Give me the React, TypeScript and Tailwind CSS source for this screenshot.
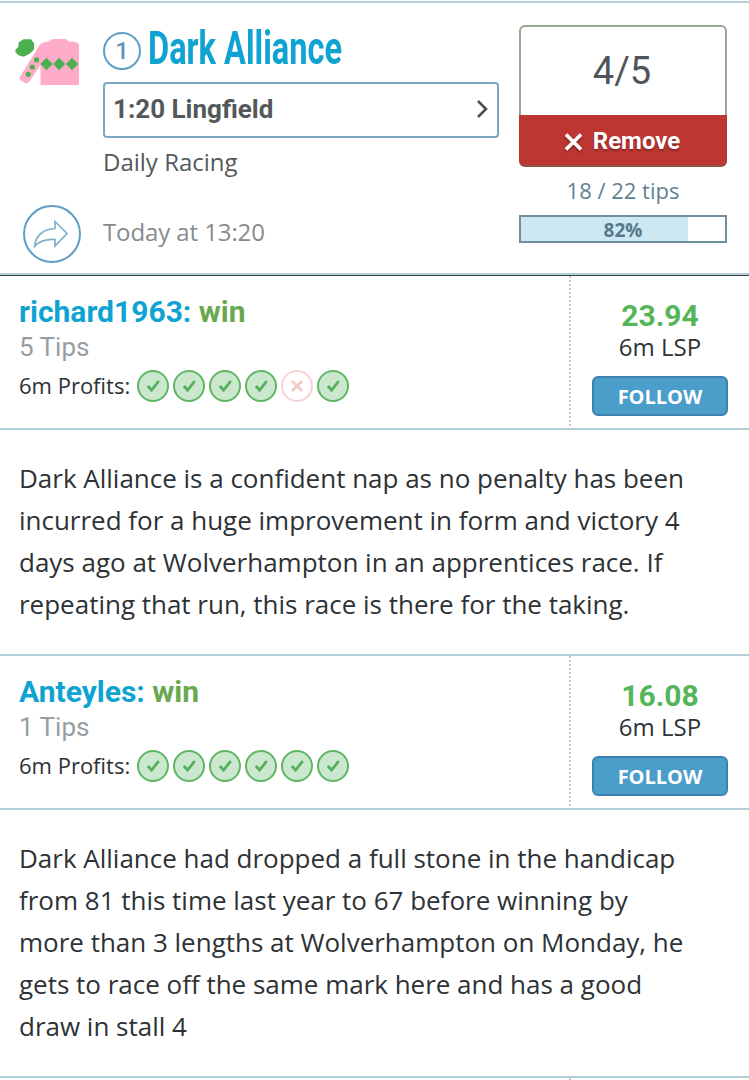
const tips = [
  {
    name: "richard1963:",
    pick: "win",
    count: "5 Tips",
    profits: [true, true, true, true, false, true],
    lsp: "23.94",
    lines: [
      "Dark Alliance is a confident nap as no penalty has been",
      "incurred for a huge improvement in form and victory 4",
      "days ago at Wolverhampton in an apprentices race. If",
      "repeating that run, this race is there for the taking.",
    ],
  },
  {
    name: "Anteyles:",
    pick: "win",
    count: "1 Tips",
    profits: [true, true, true, true, true, true],
    lsp: "16.08",
    lines: [
      "Dark Alliance had dropped a full stone in the handicap",
      "from 81 this time last year to 67 before winning by",
      "more than 3 lengths at Wolverhampton on Monday, he",
      "gets to race off the same mark here and has a good",
      "draw in stall 4",
    ],
  },
];

function Silks() {
  return (
    <svg width="66" height="48" viewBox="0 0 66 48" className="block">
      <path d="M25 6.500 L28 4.500 L34 3.500 L37 1 H51 L54 3.500 L61 4 L64 6.500 V47 H25.500 V27 L14 44 L11 45.500 L5 42 L4.500 39.500 Z" fill="#ffacca" />
      <path d="M3.500 4.500 L8.500 1.200 L16 1.200 L19.200 5.500 L19 11.500 L15 15.500 L8.500 18.700 L4 17.500 L0.500 14.500 L0.500 11.500 L3.500 9 Z" fill="#4caf50" />
      <g fill="#4caf50">
        <path d="M31.500 19.700 L37.700 26 L31.500 32.300 L25.300 26 Z" />
        <path d="M44.200 19.700 L50.400 26 L44.200 32.300 L38 26 Z" />
        <path d="M57 19.700 L63.200 26 L57 32.300 L50.800 26 Z" />
        <circle cx="21.500" cy="21.800" r="2.600" />
        <circle cx="17.300" cy="29" r="2.600" />
        <circle cx="13.200" cy="36.300" r="2.600" />
      </g>
    </svg>
  );
}

function ShareButton() {
  return (
    <button className="flex size-[58px] items-center justify-center rounded-full border-2 border-[#5f9fc6]">
      <svg width="36" height="28" viewBox="0 0 36 28" fill="none" stroke="#7fb2c9" strokeWidth="1.700" className="-ml-0.5">
        <path d="M22 1.500 L34 13.500 L22 26 V19.500 C12 19 6 21.500 1.500 26.500 C2.500 16 10 9 22 8.500 Z" />
      </svg>
    </button>
  );
}

function ProfitDot({ won }: { won: boolean }) {
  return (
    <svg width="32" height="32" viewBox="0 0 32 32" fill="none" strokeWidth="2.800">
      {won ? (
        <>
          <circle cx="16" cy="16" r="15" fill="#cbe8cf" stroke="#5fb664" strokeWidth="2" />
          <path d="M10.800 16 L14.600 20 L21.800 11" stroke="#55b05b" />
        </>
      ) : (
        <>
          <circle cx="16" cy="16" r="15" stroke="#f8d3d3" strokeWidth="2" />
          <path d="M11 11 L21 21 M21 11 L11 21" stroke="#f6c8c8" />
        </>
      )}
    </svg>
  );
}

export default function App() {
  return (
    <div className="h-[1080px] w-[749px] overflow-hidden bg-white pt-px font-['Open_Sans',sans-serif] text-[#2d3236]">
      {/* Selection header */}
      <header className="flex h-[274px] border-y-2 border-[#b2cfd9]">
        <div className="w-[103px] shrink-0">
          <div className="pt-[35px] pl-[15px]">
            <Silks />
          </div>
          <div className="mt-[119px] pl-[23px]">
            <ShareButton />
          </div>
        </div>

        <div className="w-[396px] shrink-0 whitespace-nowrap">
          <div className="flex h-[79px] items-start gap-[7px]">
            <span className="mt-[29px] flex size-[38px] shrink-0 items-center justify-center rounded-full border-2 border-[#5f9fc6] font-['Roboto',sans-serif] text-2xl font-medium text-[#5f93bf]">
              1
            </span>
            <h1 className="mt-[15px] origin-left scale-x-[0.708] font-['Roboto',sans-serif] text-[46px] leading-[60px] font-bold text-[#0fa3d1]">
              Dark Alliance
            </h1>
          </div>
          <div className="flex h-14 items-center justify-between rounded border-2 border-[#7ba6c2] pr-[9px] pb-0.5 pl-2 font-['Roboto',sans-serif] text-[26px] font-bold text-[#53585b]">
            1:20 Lingfield
            <svg width="12" height="20" viewBox="0 0 12 20" fill="none" stroke="#4b4f52" strokeWidth="2.600">
              <path d="M2 2 L10 10 L2 18" />
            </svg>
          </div>
          <p className="mt-[8px] text-2xl leading-8 text-[#54595c]">Daily Racing</p>
          <p className="mt-[38px] text-2xl leading-8 tracking-[-0.1px] text-[#868b8e]">Today at 13:20</p>
        </div>

        <div className="ml-5 w-[208px] pt-[22px] text-center">
          <div className="flex h-[90px] items-center justify-center rounded-t-md border-2 border-b-0 border-[#98a792] pr-0.5 font-['Roboto',sans-serif] text-[38px] text-[#505559]">
            4/5
          </div>
          <button className="flex h-[52px] w-full items-center justify-center gap-2.5 rounded-b-md border-b-2 border-[#8f5448] bg-[#bd3632] pt-0.5 pr-0.5 font-['Roboto',sans-serif] text-2xl font-bold text-white [text-shadow:0_2px_2px_rgba(0,0,0,0.3)]">
            <svg width="19" height="20" viewBox="0 0 19 20" fill="none" stroke="white" strokeWidth="3.600" className="mt-0.5 drop-shadow-[0_2px_1px_rgba(0,0,0,0.3)]">
              <path d="M2 2.500 L17 17.500 M17 2.500 L2 17.500" />
            </svg>
            Remove
          </button>
          <p className="mt-[7px] text-[22px] leading-8 text-[#5e8293]">18 / 22 tips</p>
          <div className="mt-[9px] grid h-7 grid-rows-[24px] border-2 border-[#71909e]">
            <div className="col-start-1 row-start-1 w-[82%] bg-[#cde8f3]" />
            <span className="col-start-1 row-start-1 pt-px text-[19px] leading-6 font-bold text-[#55798b]">82%</span>
          </div>
        </div>
      </header>
      <div className="h-px bg-[#39444f]" />

      {tips.map((tip) => (
        <section key={tip.name}>
          <div className="flex h-[154px] border-b-2 border-[#b2cfd9] whitespace-nowrap">
            <div className="w-[571px] shrink-0 pl-[19px]">
              <div className="h-[150px] border-r-2 border-dotted border-[#cfc3cb] pt-5">
                <h2 className="font-['Roboto',sans-serif] text-[30px] leading-8 font-bold text-[#0fa3d1]">
                  {tip.name} <span className="text-[#68a84e]">{tip.pick}</span>
                </h2>
                <p className="mt-[3px] font-['Roboto',sans-serif] text-[26px] leading-8 text-[#979ea1]">{tip.count}</p>
                <div className="mt-[7px] flex gap-[7px]">
                  <span className="-mt-px text-[22px] leading-8">6m Profits:</span>
                  <div className="flex gap-1">
                    {tip.profits.map((won, i) => (
                      <ProfitDot key={i} won={won} />
                    ))}
                  </div>
                </div>
              </div>
            </div>
            <div className="ml-[21px] w-[136px] pt-6 text-center">
              <p className="font-['Roboto',sans-serif] text-[30px] leading-8 font-bold text-[#55b559]">{tip.lsp}</p>
              <p className="-mt-px text-2xl leading-8">6m LSP</p>
              <button className="mt-[13px] h-10 w-full rounded-md border-2 border-[#3b83ae] bg-[#4b9dca] pt-0.5 text-xl leading-8 font-bold text-white">
                FOLLOW
              </button>
            </div>
          </div>
          <p className="border-b-2 border-[#b2cfd9] pt-[27px] pb-[29px] pl-[19px] text-[26px] leading-[42px] tracking-[-0.01px] whitespace-nowrap">
            {tip.lines.map((line) => (
              <span key={line} className="block">
                {line}
              </span>
            ))}
          </p>
        </section>
      ))}

      {/* Next tip starts below the fold */}
      <div className="h-10 w-[571px] border-r-2 border-dotted border-[#cfc3cb]" />
    </div>
  );
}
